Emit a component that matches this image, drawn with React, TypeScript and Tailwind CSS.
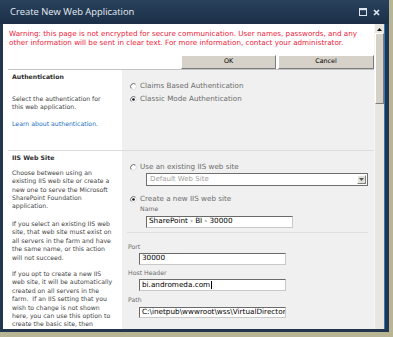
import React from "react";

const Radio = ({ checked }: { checked?: boolean }) => (
  <svg width="7" height="7" viewBox="0 0 7 7" className="shrink-0">
    <circle cx="3.5" cy="3.5" r="3" fill="#fff" />
    <path d="M1.38 5.62 A3 3 0 0 1 5.62 1.38" fill="none" stroke="#555" strokeWidth="0.9" />
    <path d="M5.62 1.38 A3 3 0 0 1 1.38 5.62" fill="none" stroke="#d8d8d8" strokeWidth="0.9" />
    {checked && <circle cx="3.5" cy="3.5" r="1.3" fill="#111" />}
  </svg>
);

const TextBox = ({ children, className }: { children: React.ReactNode; className?: string }) => (
  <div
    className={`flex h-[11.5px] items-center overflow-hidden whitespace-nowrap border border-t-[#6a6a6a] border-l-[#6a6a6a] border-r-[#c9c9c9] border-b-[#c9c9c9] bg-white pl-[2px] text-[7.25px] text-black ${className ?? ""}`}
  >
    {children}
  </div>
);

const chooseLines = [
  "Choose between using an",
  "existing IIS web site or create a",
  "new one to serve the Microsoft",
  "SharePoint Foundation",
  "application.",
];

const selectLines = [
  "If you select an existing IIS web",
  "site, that web site must exist on",
  "all servers in the farm and have",
  "the same name, or this action",
  "will not succeed.",
];

const optLines = [
  "If you opt to create a new IIS",
  "web site, it will be automatically",
  "created on all servers in the",
  "farm.  If an IIS setting that you",
  "wish to change is not shown",
  "here, you can use this option to",
  "create the basic site, then",
  "update it using the standard IIS",
];

const Lines = ({ lines, className }: { lines: string[]; className?: string }) => (
  <div className={className}>
    {lines.map((l) => (
      <div key={l} className="whitespace-pre">
        {l}
      </div>
    ))}
  </div>
);

const App = () => {
  return (
    <div className="h-[337px] w-[393px] overflow-hidden bg-[#b8b594] font-['DejaVu_Sans',sans-serif]">
      <div className="flex h-[332px] w-[389px] flex-col bg-[#22374e]">
        {/* title bar */}
        <div className="flex h-[24px] shrink-0 items-center bg-gradient-to-b from-[#2a425d] to-[#1b2f47] pl-[10px] pr-[9px]">
          <span className="font-['Open_Sans',sans-serif] text-[9.4px] text-[#e6ecf3]">
            Create New Web Application
          </span>
          <div className="ml-auto flex items-center gap-[6px]">
            <svg width="8" height="8" viewBox="0 0 8 8">
              <rect x="0.5" y="0.5" width="7" height="7" fill="none" stroke="#dde4ec" />
              <rect x="0" y="0" width="8" height="2.2" fill="#dde4ec" />
            </svg>
            <svg width="7" height="7" viewBox="0 0 7 7">
              <path d="M1 1L6 6M6 1L1 6" stroke="#dde4ec" strokeWidth="1.7" />
            </svg>
          </div>
        </div>

        <div className="flex min-h-0 flex-1 pb-[3px] pl-[3px] pr-[4px]">
          {/* dialog content */}
          <div className="flex min-w-0 flex-1 flex-col overflow-hidden bg-white">
            <div className="whitespace-nowrap pl-[6px] pt-[4.5px] text-[7.2px] leading-[9.4px] text-[#ee2038]">
              <div>
                Warning: this page is not encrypted for secure communication. User names, passwords, and any
              </div>
              <div>
                other information will be sent in clear text. For more information, contact your administrator.
              </div>
            </div>

            <div className="mt-[7.5px] flex justify-end gap-[2px]">
              <button className="flex h-[14px] w-[95px] items-center justify-center border border-t-white border-l-white border-r-[#7c7c7c] border-b-[#7c7c7c] bg-[#d6d2ca] text-[6.4px] text-black">
                OK
              </button>
              <button className="flex h-[14px] w-[96px] items-center justify-center border border-t-white border-l-white border-r-[#7c7c7c] border-b-[#7c7c7c] bg-[#d6d2ca] text-[6.4px] text-black">
                Cancel
              </button>
            </div>

            <div className="ml-[5px] flex min-h-0 flex-1 flex-col border-t border-[#c4c4c4]">
              {/* Authentication */}
              <div className="flex h-[80px] shrink-0">
                <div className="w-[114px] shrink-0 pl-[4px] pt-[3px] text-[6.2px] leading-[8.5px] text-[#3f3f3f]">
                  <div className="font-bold text-[#2e2e2e]">Authentication</div>
                  <Lines className="mt-[13.5px]" lines={["Select the authentication for", "this web application."]} />
                  <div className="mt-[8px] text-[#1a6fbf]">Learn about authentication.</div>
                </div>
                <div className="flex-1 bg-[#f0f0f0] pl-[7.5px] pt-[9.7px] text-[7.2px] text-[#6c6c6c]">
                  <div className="flex h-[13px] items-center gap-[3.5px]">
                    <Radio />
                    <span>Claims Based Authentication</span>
                  </div>
                  <div className="flex h-[13px] items-center gap-[3.5px]">
                    <Radio checked />
                    <span>Classic Mode Authentication</span>
                  </div>
                </div>
              </div>

              {/* IIS Web Site */}
              <div className="flex min-h-0 flex-1 border-t border-[#dcdcdc]">
                <div className="w-[114px] shrink-0 pl-[4px] pt-[2.9px] text-[6.2px] leading-[8.45px] text-[#3f3f3f]">
                  <div className="font-bold text-[#2e2e2e]">IIS Web Site</div>
                  <Lines className="mt-[6.5px]" lines={chooseLines} />
                  <Lines className="mt-[9px]" lines={selectLines} />
                  <Lines className="mt-[7.5px]" lines={optLines} />
                </div>
                <div className="flex-1 bg-[#f0f0f0] pt-[11.7px] text-[6.2px] text-[#6c6c6c]">
                  <div className="flex h-[9px] items-center gap-[3.5px] pl-[7.5px] text-[7.2px]">
                    <Radio />
                    <span>Use an existing IIS web site</span>
                  </div>
                  <div className="ml-[24px] mt-[1.5px] flex h-[13px] w-[222px] items-center border border-[#6f6f6f] bg-white pl-[3px] text-[7px] text-[#a0a0a0]">
                    <span>Default Web Site</span>
                    <div className="ml-auto mr-[1px] flex h-[9px] w-[9px] items-center justify-center border border-t-white border-l-white border-r-[#808080] border-b-[#808080] bg-[#e4e2dc]">
                      <svg width="5" height="3" viewBox="0 0 5 3">
                        <path d="M0 0H5L2.5 3Z" fill="#555" />
                      </svg>
                    </div>
                  </div>
                  <div className="mt-[9px] flex h-[9px] items-center gap-[3.5px] pl-[7.5px] text-[7.2px]">
                    <Radio checked />
                    <span>Create a new IIS web site</span>
                  </div>
                  <div className="mt-[0.75px] pl-[18px] leading-[8.5px]">Name</div>
                  <TextBox className="ml-[24px] mt-[2.75px] w-[147px]">SharePoint - BI - 30000</TextBox>
                  <div className="ml-[5px] mt-[4.5px] h-px w-[241px] bg-[#e0e0e0]" />
                  <div className="mt-[9.75px] pl-[6px] leading-[8.5px]">Port</div>
                  <TextBox className="ml-[17px] mt-[1.75px] w-[147px]">30000</TextBox>
                  <div className="mt-[4.25px] pl-[6px] leading-[8.5px]">Host Header</div>
                  <TextBox className="ml-[17px] mt-[2px] w-[147px]">
                    bi.andromeda.com
                    <span className="ml-[0.5px] inline-block h-[8px] w-px bg-black" />
                  </TextBox>
                  <div className="mt-[5px] pl-[6px] leading-[8.5px]">Path</div>
                  <TextBox className="ml-[17px] mt-[2.5px] w-[147px]">
                    {"C:\\inetpub\\wwwroot\\wss\\VirtualDirectories\\30000"}
                  </TextBox>
                </div>
              </div>
            </div>
          </div>

          {/* scrollbar */}
          <div className="flex w-[10px] shrink-0 flex-col border-l border-[#f8f7f4] bg-[#e8e6e0] pt-[1px]">
            <div className="flex h-[8px] items-center justify-center">
              <svg width="5" height="3" viewBox="0 0 5 3">
                <path d="M0 3H5L2.5 0Z" fill="#111" />
              </svg>
            </div>
            <div className="h-[71px] border border-t-white border-l-white border-r-[#7d7d7d] border-b-[#7d7d7d] bg-[#d5d1c9]" />
          </div>
          <div className="w-px shrink-0 bg-[#2b7bcc]" />
        </div>
      </div>
    </div>
  );
};

export default App;
